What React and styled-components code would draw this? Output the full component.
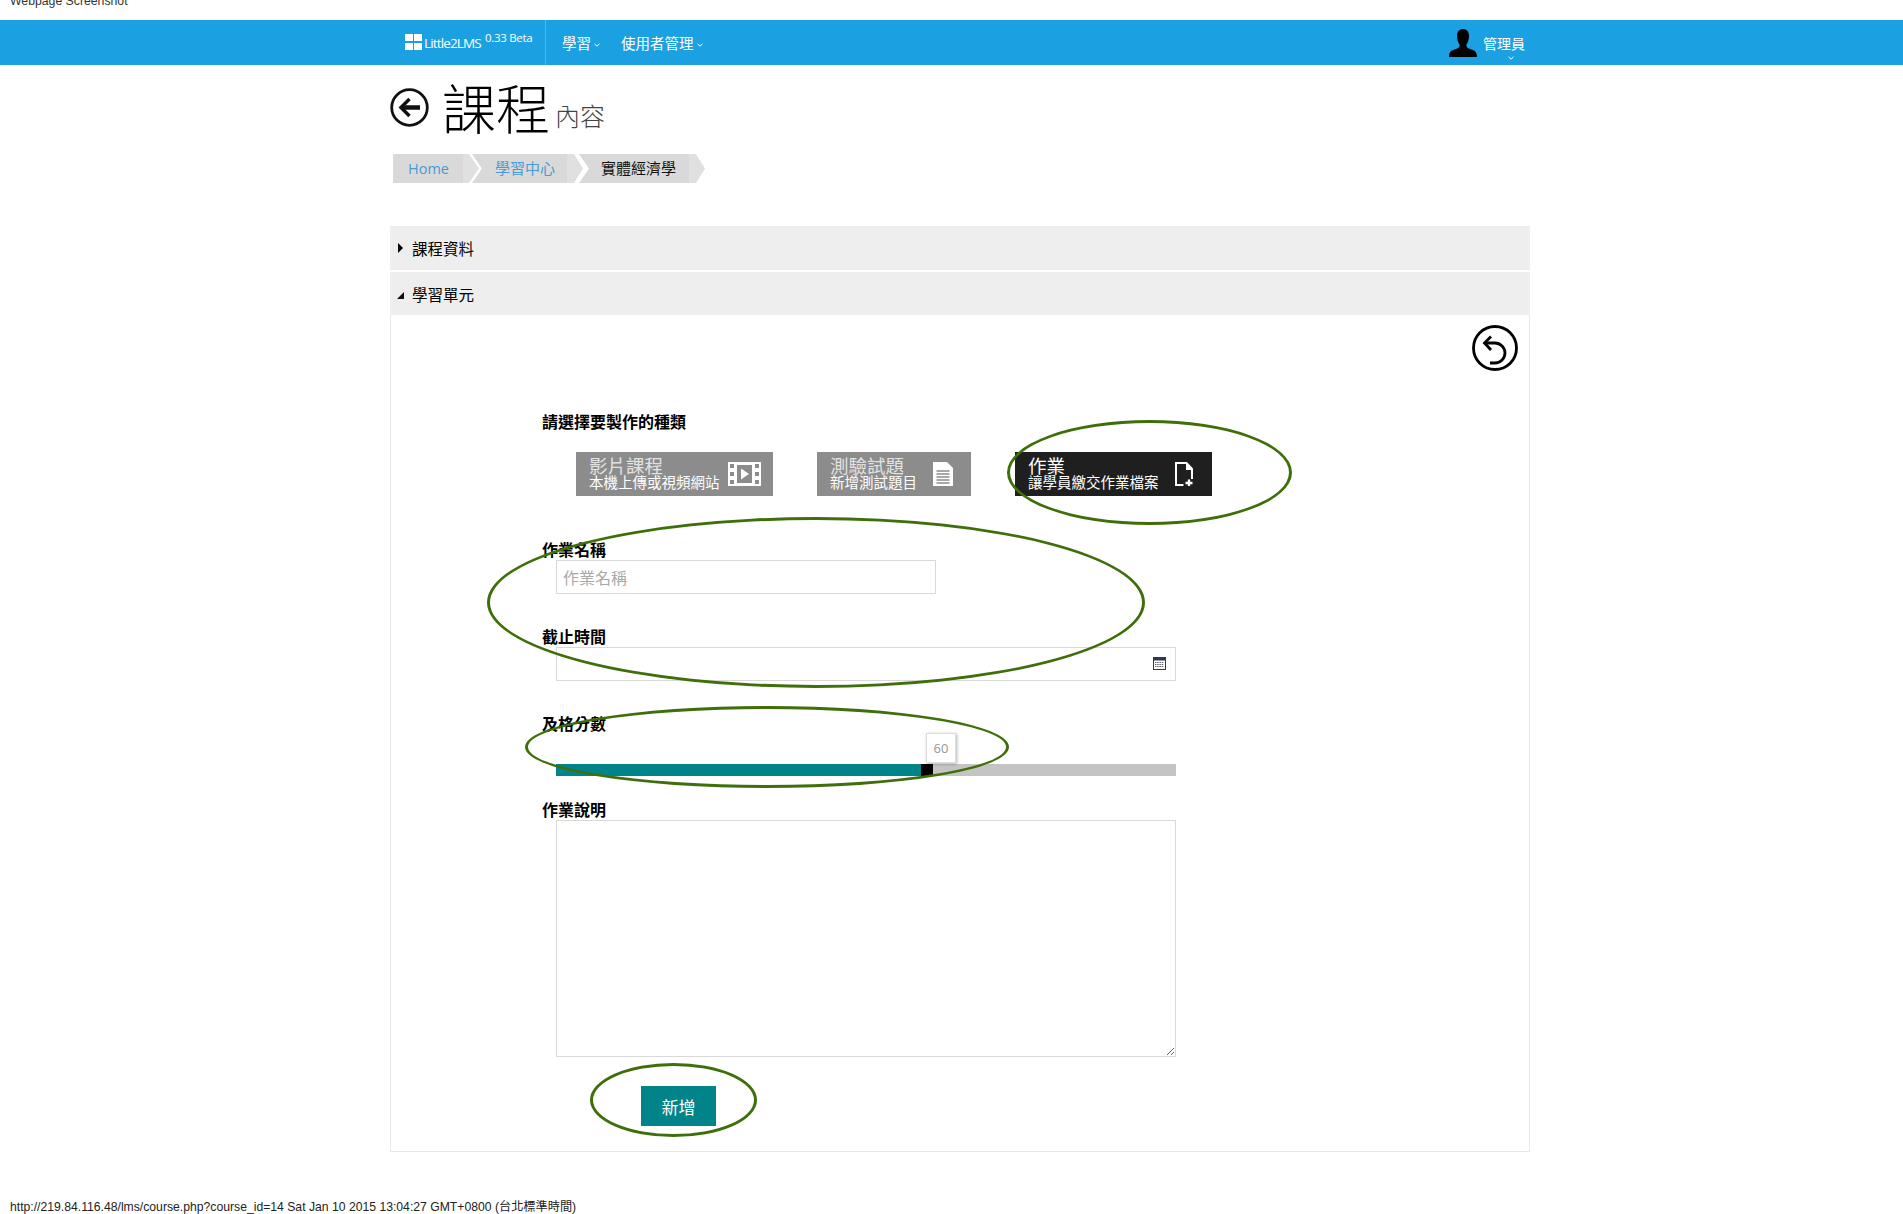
import React from "react";
import styled, { createGlobalStyle } from "styled-components";

const Global = createGlobalStyle`
  html, body { margin: 0; padding: 0; background: #fff; }
  body { font-family: "Open Sans", "Noto Sans CJK TC", sans-serif; color: #000; overflow: hidden; }
  * { box-sizing: border-box; }
`;

const Page = styled.div`
  position: relative;
  width: 1903px;
  height: 1214px;
  overflow: hidden;
`;

const ScreenshotNote = styled.div`
  height: 20px;
  padding-left: 10px;
  font: 12.25px/12px "Liberation Sans", "Noto Sans CJK TC", sans-serif;
  color: #333;
  overflow: hidden;
  & > span { display: block; margin-top: -5px; }
`;

const TopBar = styled.header`
  height: 45px;
  background: #1ba1e2;
  color: #fff;
  display: flex;
  align-items: stretch;
  padding: 0 378px 0 405px;
`;

const Brand = styled.div`
  width: 141px;
  display: flex;
  align-items: flex-start;
  padding-top: 14px;
  border-right: 1px solid #53b5e5;
  font-size: 13.5px;
  line-height: 18px;
`;

const BrandMark = styled.span`
  display: grid;
  grid-template-columns: 8px 8px;
  grid-template-rows: 7px 7px;
  gap: 2px 1px;
  width: 19px;
  flex: none;
  & > i { background: #fff; display: block; }
`;

const BrandName = styled.span`
  letter-spacing: -0.85px;
`;

const Version = styled.sup`
  font-size: 11.5px;
  line-height: 12px;
  margin-left: 4px;
  margin-top: -2px;
  letter-spacing: -0.3px;
  vertical-align: baseline;
  align-self: flex-start;
`;

const Nav = styled.nav`
  display: flex;
  padding-left: 16px;
  gap: 21px;
  flex: 1;
`;

const NavItem = styled.div`
  display: flex;
  align-items: center;
  gap: 3px;
  font-size: 14.5px;
  height: 33px;
  margin-top: 6px;
`;

const Caret = styled.svg`
  width: 6px;
  height: 4px;
  margin-top: 5px;
`;

const UserBox = styled.div`
  position: relative;
  display: flex;
  align-items: flex-start;
  gap: 6px;
  padding-top: 9px;
  font-size: 14px;
`;

const UserName = styled.span`
  line-height: 18px;
  margin-top: 6px;
`;

const UserCaret = styled(Caret)`
  position: absolute;
  right: 11px;
  bottom: 5px;
  margin: 0;
`;

const Main = styled.main`
  width: 1140px;
  margin-left: 390px;
`;

const TitleRow = styled.div`
  display: flex;
  align-items: flex-start;
  height: 89px;
`;

const BackIcon = styled.svg`
  width: 39px;
  height: 39px;
  margin-top: 23px;
  flex: none;
`;

const Title = styled.h1`
  margin: 9px 0 0 13px;
  font-size: 54px;
  line-height: 66px;
  font-weight: 300;
  font-family: "Noto Sans CJK TC", sans-serif;
`;

const Subtitle = styled.small`
  font-size: 25px;
  line-height: 30px;
  margin: 35px 0 0 5px;
  color: #444;
  font-weight: 300;
  font-family: "Noto Sans CJK TC", sans-serif;
`;

const Crumbs = styled.div`
  display: flex;
  height: 29px;
  margin-left: 3px;
`;

const Crumb = styled.div`
  width: ${(p) => p.$width}px;
  margin-left: ${(p) => (p.$first ? 0 : p.$overlap)}px;
  padding-left: ${(p) => p.$pad}px;
  background: linear-gradient(to right, #d9d9d9 calc(100% - 16px), #e0e0e0 calc(100% - 16px));
  color: ${(p) => (p.$link ? "#4a9ad4" : "#111")};
  font-size: ${(p) => (p.$first ? 14.5 : 15)}px;
  line-height: 29px;
  white-space: nowrap;
  clip-path: ${(p) =>
    p.$first
      ? "polygon(0 0, calc(100% - 10px) 0, 100% 50%, calc(100% - 10px) 100%, 0 100%)"
      : "polygon(0 0, calc(100% - 9px) 0, 100% 50%, calc(100% - 9px) 100%, 0 100%, 10px 50%)"};
`;

const Accordion = styled.section`
  margin-top: 43px;
  display: flex;
  flex-direction: column;
  gap: 2px;
`;

const AccordionHead = styled.div`
  display: flex;
  align-items: center;
  height: ${(p) => p.$height}px;
  background: #eeeeee;
  padding: ${(p) => (p.$open ? 1 : 0)}px 0 0 22px;
  position: relative;
  font-size: 15.5px;
`;

const Arrow = styled.span`
  position: absolute;
  left: ${(p) => (p.$open ? 7 : 8)}px;
  top: ${(p) => (p.$open ? 20 : 17)}px;
  width: 0;
  height: 0;
  ${(p) =>
    p.$open
      ? "border-left: 7px solid transparent; border-bottom: 7px solid #111;"
      : "border-left: 5px solid #000; border-top: 5px solid transparent; border-bottom: 5px solid transparent;"}
`;

const AccordionBody = styled.div`
  border: 1px solid #e8e8e8;
  border-top: 0;
  margin-top: -2px;
  padding: 10px 11px 25px 151px;
  display: flex;
  flex-direction: column;
  align-items: flex-start;
`;

const UndoIcon = styled.svg`
  width: 46px;
  height: 46px;
  align-self: flex-end;
`;

const FieldLabel = styled.label`
  display: block;
  font-size: 16px;
  line-height: 18px;
  font-weight: 700;
  margin-top: ${(p) => p.$top}px;
`;

const Tiles = styled.div`
  display: flex;
  gap: 44px;
  margin: 21px 0 0 34px;
`;

const Tile = styled.div`
  width: ${(p) => p.$width}px;
  height: 44px;
  background: ${(p) => (p.$active ? "#1f1f1f" : "#8c8c8c")};
  color: #fff;
  display: flex;
  align-items: flex-start;
  justify-content: space-between;
  padding: 4px ${(p) => p.$inset}px 0 13px;
`;

const TileText = styled.div`
  display: flex;
  flex-direction: column;
`;

const TileTitle = styled.span`
  font-size: 18.5px;
  line-height: 19px;
  color: ${(p) => (p.$active ? "#fff" : "#e2e2e2")};
`;

const TileSub = styled.span`
  font-size: 14.5px;
  line-height: 15px;
  white-space: nowrap;
`;

const TileIcon = styled.svg`
  width: ${(p) => p.$width}px;
  height: 24px;
  margin-top: 6px;
  flex: none;
`;

const FieldBox = styled.div`
  position: relative;
  margin: 1px 0 0 14px;
  width: ${(p) => p.$width}px;
  height: 34px;
`;

const TextField = styled.input`
  width: 100%;
  height: 100%;
  border: 1px solid #d9d9d9;
  background: #fff;
  padding: 0 6px;
  font: 16px "Noto Sans CJK TC", sans-serif;
  outline: none;
  &::placeholder { color: #a9a9a9; opacity: 1; }
`;

const CalendarIcon = styled.svg`
  position: absolute;
  right: 10px;
  top: 10px;
  width: 13px;
  height: 13px;
`;

const Slider = styled.div`
  position: relative;
  display: flex;
  width: 620px;
  height: 12px;
  margin: 31px 0 0 14px;
  background: #c4c4c4;
`;

const SliderFill = styled.div`
  height: 100%;
  background: #008489;
`;

const SliderHandle = styled.div`
  position: relative;
  width: 12px;
  height: 100%;
  flex: none;
  background: #000;
`;

const SliderTip = styled.div`
  position: absolute;
  left: 5px;
  bottom: 13px;
  width: 30px;
  height: 30px;
  background: #fff;
  border: 1px solid #ddd;
  box-shadow: 1px 1px 3px rgba(0, 0, 0, 0.3);
  color: #999;
  font-size: 13px;
  line-height: 28px;
  text-align: center;
`;

const TextArea = styled.textarea`
  display: block;
  width: 620px;
  height: 237px;
  margin: 1px 0 0 14px;
  border: 1px solid #d9d9d9;
  background: #fff;
  outline: none;
`;

const SubmitButton = styled.button`
  width: 75px;
  height: 40px;
  margin: 29px 0 0 99px;
  border: 0;
  padding: 0;
  background: #008489;
  color: #fff;
  font: 17px "Noto Sans CJK TC", sans-serif;
`;

const Footer = styled.footer`
  margin-top: 49px;
  padding-left: 10px;
  font: 12.2px/12px "Liberation Sans", "Noto Sans CJK TC", sans-serif;
  color: #222;
  white-space: nowrap;
`;

const Annotation = styled.div`
  position: absolute;
  left: ${(p) => p.$x}px;
  top: ${(p) => p.$y}px;
  width: ${(p) => p.$w}px;
  height: ${(p) => p.$h}px;
  border: 3px solid #3f6f0a;
  border-radius: 50%;
  pointer-events: none;
`;

const CaretGlyph = ({ as: Comp = Caret }) => (
  <Comp viewBox="0 0 6 4">
    <path d="M0.5 0.8 L3 3.2 L5.5 0.8" fill="none" stroke="#fff" strokeWidth="1" />
  </Comp>
);

export default function App() {
  return (
    <Page>
      <Global />
      <ScreenshotNote>
        <span>Webpage Screenshot</span>
      </ScreenshotNote>
      <TopBar>
        <Brand>
          <BrandMark>
            <i /><i /><i /><i />
          </BrandMark>
          <BrandName>Little2LMS</BrandName>
          <Version>0.33 Beta</Version>
        </Brand>
        <Nav>
          <NavItem>學習<CaretGlyph /></NavItem>
          <NavItem>使用者管理<CaretGlyph /></NavItem>
        </Nav>
        <UserBox>
          <svg width="28" height="28" viewBox="0 0 28 28">
            <path d="M14 0c-4 0-6 3-6 7 0 3 .8 6 2.2 8 .5.8.5 1.6.1 2.8-.4 1-1.8 1.8-4.3 2.5C2.5 21.3 0 23 0 28h28c0-5-2.5-6.700-6-7.700-2.500-.7-3.900-1.500-4.300-2.500-.4-1.200-.4-2 .1-2.800C19.200 13 20 10 20 7c0-4-2-7-6-7z" fill="#000" />
          </svg>
          <UserName>管理員</UserName>
          <CaretGlyph as={UserCaret} />
        </UserBox>
      </TopBar>
      <Main>
        <TitleRow>
          <BackIcon viewBox="0 0 39 39">
            <circle cx="19.5" cy="19.5" r="17.8" fill="none" stroke="#111" strokeWidth="2.8" />
            <path d="M30 19.5H13" fill="none" stroke="#111" strokeWidth="4.5" />
            <path d="M19.5 11l-8.500 8.500 8.500 8.500" fill="none" stroke="#111" strokeWidth="3.5" />
          </BackIcon>
          <Title>課程</Title>
          <Subtitle>內容</Subtitle>
        </TitleRow>
        <Crumbs>
          <Crumb $first $link $width={86} $pad={15}>Home</Crumb>
          <Crumb $link $width={111} $overlap={-7} $pad={23}>學習中心</Crumb>
          <Crumb $width={126} $overlap={-4} $pad={22}>實體經濟學</Crumb>
        </Crumbs>
        <Accordion>
          <AccordionHead $height={44}><Arrow />課程資料</AccordionHead>
          <AccordionHead $height={43} $open><Arrow $open />學習單元</AccordionHead>
          <AccordionBody>
            <UndoIcon viewBox="0 0 46 46">
              <circle cx="23" cy="23" r="21.5" fill="none" stroke="#000" strokeWidth="2.8" />
              <path d="M13.5 18h9.5a10 10 0 0 1 0 20h-5" fill="none" stroke="#000" strokeWidth="2.8" />
              <path d="M19 11.500l-6.500 6.500 6.500 7" fill="none" stroke="#000" strokeWidth="2.8" />
            </UndoIcon>
            <FieldLabel $top={42}>請選擇要製作的種類</FieldLabel>
            <Tiles>
              <Tile $width={197} $inset={12}>
                <TileText>
                  <TileTitle>影片課程</TileTitle>
                  <TileSub>本機上傳或視頻網站</TileSub>
                </TileText>
                <TileIcon $width={33} viewBox="0 0 33 24">
                  <path
                    fillRule="evenodd"
                    fill="#fff"
                    d="M0 0h33v24H0zM2 2v4h4V2zM2 10v4h4v-4zM2 18v4h4v-4zM27 2v4h4V2zM27 10v4h4v-4zM27 18v4h4v-4zM9 3v18h15V3z"
                  />
                  <path d="M13 6.5v11l8-5.5z" fill="#fff" />
                </TileIcon>
              </Tile>
              <Tile $width={154} $inset={18}>
                <TileText>
                  <TileTitle>測驗試題</TileTitle>
                  <TileSub>新增測試題目</TileSub>
                </TileText>
                <TileIcon $width={20} viewBox="0 0 20 24">
                  <path d="M0 0h14l6 6v18H0z" fill="#fff" />
                  <path d="M3.5 9h13M3.5 12h13M3.5 15h13M3.5 18h13M3.500 21h13" stroke="#8c8c8c" strokeWidth="1.500" />
                </TileIcon>
              </Tile>
              <Tile $width={197} $inset={18} $active>
                <TileText>
                  <TileTitle $active>作業</TileTitle>
                  <TileSub>讓學員繳交作業檔案</TileSub>
                </TileText>
                <TileIcon $width={20} viewBox="0 0 20 24">
                  <path d="M9.5 23H2V1h10.500l5.500 6v10" fill="none" stroke="#fff" strokeWidth="2" />
                  <path d="M12 1h1.500l5 6v1H12z" fill="#fff" />
                  <path d="M15 17.500v7M11.500 21h7" stroke="#fff" strokeWidth="2.400" />
                </TileIcon>
              </Tile>
            </Tiles>
            <FieldLabel $top={45}>作業名稱</FieldLabel>
            <FieldBox $width={380}>
              <TextField placeholder="作業名稱" />
            </FieldBox>
            <FieldLabel $top={34}>截止時間</FieldLabel>
            <FieldBox $width={620}>
              <TextField />
              <CalendarIcon viewBox="0 0 13 13">
                <rect x="0.5" y="0.5" width="12" height="12" fill="#fff" stroke="#2a3a55" />
                <rect x="0" y="0" width="13" height="3.5" fill="#2a3a55" />
                <path d="M2 5.500h9M2 7.500h9M2 9.500h9" stroke="#666" strokeWidth="1" strokeDasharray="1.500 .7" />
              </CalendarIcon>
            </FieldBox>
            <FieldLabel $top={34}>及格分數</FieldLabel>
            <Slider>
              <SliderFill style={{ width: `${(365 / 620) * 100}%` }} />
              <SliderHandle>
                <SliderTip>60</SliderTip>
              </SliderHandle>
            </Slider>
            <FieldLabel $top={25}>作業說明</FieldLabel>
            <TextArea />
            <SubmitButton>新增</SubmitButton>
          </AccordionBody>
        </Accordion>
      </Main>
      <Footer>http://219.84.116.48/lms/course.php?course_id=14 Sat Jan 10 2015 13:04:27 GMT+0800 (台北標準時間)</Footer>
      <Annotation $x={1007} $y={420} $w={285} $h={105} />
      <Annotation $x={487} $y={517} $w={658} $h={171} />
      <Annotation $x={525} $y={706} $w={484} $h={82} />
      <Annotation $x={590} $y={1063} $w={167} $h={74} />
    </Page>
  );
}
